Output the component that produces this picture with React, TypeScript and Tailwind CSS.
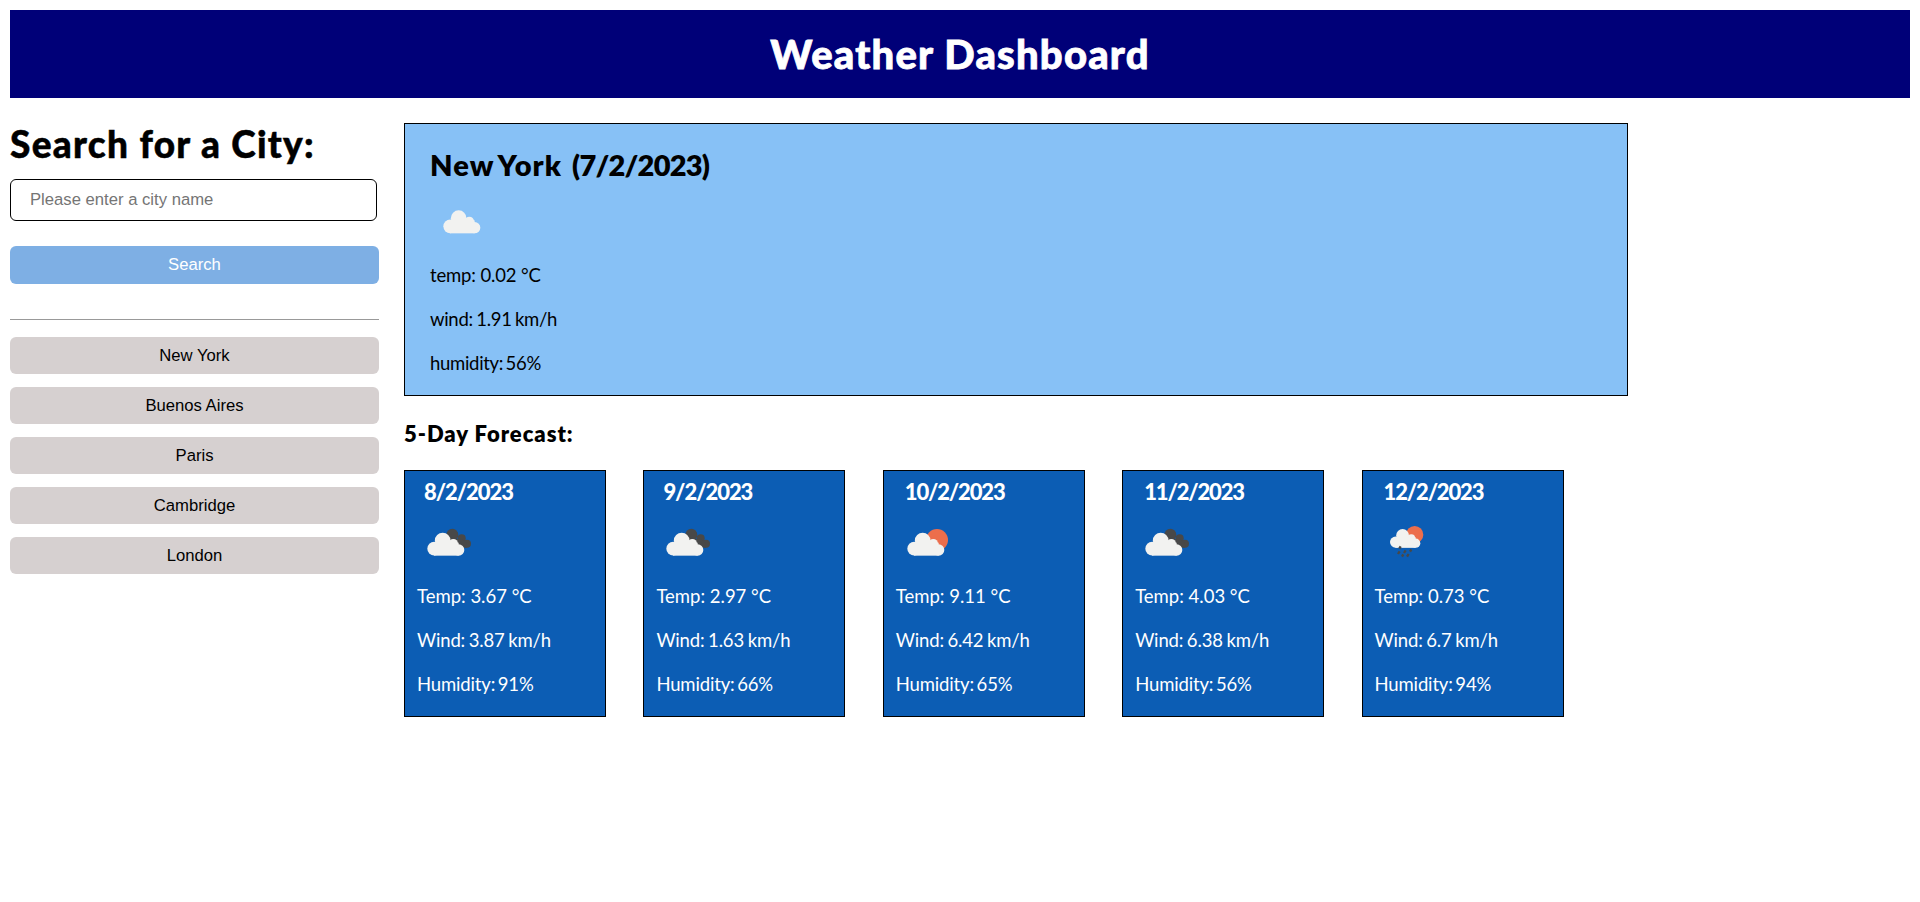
import React from "react";

const CLOUD = (
  <g fill="#f2f2f0">
    <circle cx="20.5" cy="48" r="20.5" />
    <circle cx="46" cy="23.5" r="23.5" />
    <circle cx="78" cy="33" r="14" />
    <circle cx="94" cy="52" r="17" />
    <rect x="20" y="30" width="74" height="39" />
  </g>
);

type Sky = "cloud" | "broken" | "sun" | "rain";

function SkyIcon({ sky }: { sky: Sky }) {
  return (
    <svg className="block size-[50px]" viewBox="0 0 150 150">
      {sky === "cloud" && <g transform="translate(19 40)">{CLOUD}</g>}
      {sky === "broken" && (
        <g>
          <g fill="#484848">
            <circle cx="94" cy="47" r="18" />
            <circle cx="122" cy="58" r="12" />
            <circle cx="138" cy="74" r="12" />
            <path d="M94 60H122L138 74V86H110Z" />
          </g>
          <g transform="translate(19 41)">{CLOUD}</g>
        </g>
      )}
      {sky === "sun" && (
        <g>
          <circle cx="111" cy="63" r="33" fill="#ec6e4c" />
          <g transform="translate(22 41)">{CLOUD}</g>
        </g>
      )}
      {sky === "rain" && (
        <g>
          <circle cx="107" cy="47" r="26" fill="#ec6e4c" />
          <g transform="translate(33 30) scale(.82)">{CLOUD}</g>
          <g stroke="#484848" strokeWidth="7">
            <path d="M65 82l-4 7M62 97l-5 8M80 94l-5 8M97 91l-4 7M73 106l-4 7M89 105l-5 8" />
          </g>
        </g>
      )}
    </svg>
  );
}

const CITIES = ["New York", "Buenos Aires", "Paris", "Cambridge", "London"];

const DAYS: { date: string; sky: Sky; temp: string; wind: string; humidity: string }[] = [
  { date: "8/2/2023", sky: "broken", temp: "3.67", wind: "3.87", humidity: "91" },
  { date: "9/2/2023", sky: "broken", temp: "2.97", wind: "1.63", humidity: "66" },
  { date: "10/2/2023", sky: "sun", temp: "9.11", wind: "6.42", humidity: "65" },
  { date: "11/2/2023", sky: "broken", temp: "4.03", wind: "6.38", humidity: "56" },
  { date: "12/2/2023", sky: "rain", temp: "0.73", wind: "6.7", humidity: "94" },
];

export default function App() {
  return (
    <div className="min-h-[902px] bg-white p-[10px] font-['Lato',sans-serif] text-black">
      <header className="flex h-[88px] items-center justify-center bg-[#000078]">
        <h1 className="text-[40px] leading-[48px] font-black tracking-[1.2px] text-white [-webkit-text-stroke:0.8px_white]">
          Weather Dashboard
        </h1>
      </header>
      <div className="flex gap-[25px] pt-[25px]">
        <aside className="w-[369px] shrink-0">
          <h2 className="-mt-px text-[37px] leading-[44px] font-black tracking-[1.3px] whitespace-nowrap [-webkit-text-stroke:0.5px_black]">
            Search for a City:
          </h2>
          <input
            className="mt-[13px] block h-[42px] w-[367px] rounded-[6px] border border-black px-[19px] pb-px font-['Liberation_Sans',sans-serif] text-[16.67px] placeholder:text-[#757575]"
            placeholder="Please enter a city name"
          />
          <button className="mt-[25px] block h-[38px] w-full rounded-[6px] bg-[#7eafe4] pb-[2px] font-['Liberation_Sans',sans-serif] text-[16.67px] text-white">
            Search
          </button>
          <hr className="mt-[35px] mb-[17px] border-t border-[#999999]" />
          <div className="flex flex-col gap-[13px]">
            {CITIES.map((c) => (
              <button key={c} className="h-[37px] w-full rounded-[6px] bg-[#d6d0d0] font-['Liberation_Sans',sans-serif] text-[16.67px]">
                {c}
              </button>
            ))}
          </div>
        </aside>
        <main className="w-[1224px]">
          <section className="h-[273px] border border-black bg-[#87c1f6] px-[25px] pt-[24px]">
            <h2 className="flex gap-[10px] text-[29px] leading-[34px] font-extrabold">
              <span className="tracking-[1.1px] [word-spacing:-3px]">New York</span>
              <span className="tracking-[-0.8px]">(7/2/2023)</span>
            </h2>
            <div className="mt-[15px] ml-[7px]">
              <SkyIcon sky="cloud" />
            </div>
            <div className="mt-[17px] flex flex-col gap-[22px] text-[18.5px] leading-[22px]">
              <p className="tracking-[-0.15px]">temp: 0.02 °C</p>
              <p className="tracking-[-0.3px] [word-spacing:-1px]">wind: 1.91 km/h</p>
              <p className="tracking-[-0.3px] [word-spacing:-2px]">humidity: 56%</p>
            </div>
          </section>
          <h3 className="mt-[25px] text-[22px] leading-[26px] font-extrabold tracking-[0.95px]">5-Day Forecast:</h3>
          <section className="mt-[23px] flex gap-[37.4px]">
            {DAYS.map((d) => (
              <article key={d.date} className="h-[247px] w-[202px] border border-black bg-[#0c5db4] px-[12px] pt-[8px] text-white">
                <h4
                  className={
                    d.date.length > 8
                      ? "ml-[9px] text-[22px] leading-[26px] font-black tracking-[-1.15px]"
                      : "ml-[7px] text-[22px] leading-[26px] font-black tracking-[-1.05px]"
                  }
                >
                  {d.date}
                </h4>
                <div className="mt-[14px] ml-[4px]">
                  <SkyIcon sky={d.sky} />
                </div>
                <div className="mt-[16px] flex flex-col gap-[22px] text-[18.5px] leading-[22px]">
                  <p>Temp: {d.temp} °C</p>
                  <p className="tracking-[-0.15px] [word-spacing:-1px]">Wind: {d.wind} km/h</p>
                  <p className="tracking-[-0.15px] [word-spacing:-2px]">Humidity: {d.humidity}%</p>
                </div>
              </article>
            ))}
          </section>
        </main>
      </div>
    </div>
  );
}
